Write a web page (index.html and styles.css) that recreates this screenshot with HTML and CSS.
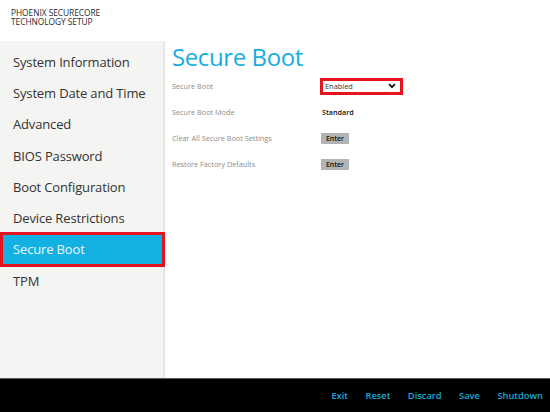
FILE: index.html
```html
<!DOCTYPE html>
<html>
<head>
<meta charset="utf-8">
<link rel="stylesheet" href="styles.css">
</head>
<body>
<div class="page">
  <header class="header">
    <div class="brand-line">PHOENIX SECURECORE</div>
    <div class="brand-line">TECHNOLOGY SETUP</div>
  </header>
  <div class="main">
    <nav class="sidebar">
      <div class="nav-item">System Information</div>
      <div class="nav-item">System Date and Time</div>
      <div class="nav-item">Advanced</div>
      <div class="nav-item">BIOS Password</div>
      <div class="nav-item">Boot Configuration</div>
      <div class="nav-item">Device Restrictions</div>
      <div class="nav-item selected">Secure Boot</div>
      <div class="nav-item">TPM</div>
    </nav>
    <section class="content">
      <h1 class="title">Secure Boot</h1>
      <div class="row">
        <div class="label">Secure Boot</div>
        <div class="select">
          <span>Enabled</span>
          <svg class="chev" width="8" height="6" viewBox="0 0 8 6"><path d="M1 1.2 L4 4.2 L7 1.2" fill="none" stroke="#111" stroke-width="1.8"/></svg>
        </div>
      </div>
      <div class="row">
        <div class="label">Secure Boot Mode</div>
        <div class="value">Standard</div>
      </div>
      <div class="row">
        <div class="label">Clear All Secure Boot Settings</div>
        <div class="btn">Enter</div>
      </div>
      <div class="row">
        <div class="label">Restore Factory Defaults</div>
        <div class="btn">Enter</div>
      </div>
    </section>
  </div>
  <footer class="footer">
    <span class="fbtn">Exit</span>
    <span class="fbtn">Reset</span>
    <span class="fbtn">Discard</span>
    <span class="fbtn">Save</span>
    <span class="fbtn">Shutdown</span>
  </footer>
</div>
</body>
</html>
```
FILE: styles.css
```css
html, body {
  margin: 0;
  padding: 0;
  background: #ffffff;
}
body {
  font-family: "Open Sans", "Noto Sans", sans-serif;
}
.page {
  width: 550px;
  height: 412px;
  display: flex;
  flex-direction: column;
  overflow: hidden;
}
.header {
  height: 41px;
  box-sizing: border-box;
  padding: 9px 0 0 11px;
}
.brand-line {
  font-size: 8.4px;
  line-height: 8.5px;
  color: #2a2a2a;
  letter-spacing: -0.05px;
}
.main {
  flex: 1;
  display: flex;
  min-height: 0;
}
.sidebar {
  width: 163px;
  background: #f4f4f2;
  border-right: 2px solid #e6e6e4;
  padding-top: 5px;
  display: flex;
  flex-direction: column;
}
.nav-item {
  height: 31.3px;
  display: flex;
  align-items: center;
  padding-left: 13px;
  font-size: 13px;
  color: #333333;
  letter-spacing: -0.15px;
  box-sizing: border-box;
}
.nav-item.selected {
  height: 35.3px;
  margin: -2px -2px -2px 0;
  border: 3px solid #e5141f;
  padding-left: 10px;
  background: #12b1e2;
  color: #eaf8fd;
}
.content {
  flex: 1;
  padding-left: 7px;
  display: flex;
  flex-direction: column;
}
.title {
  margin: 0;
  font-weight: 400;
  font-size: 24px;
  line-height: 32px;
  color: #17ace0;
  letter-spacing: -0.4px;
  height: 32px;
}
.row {
  height: 26px;
  display: flex;
  align-items: center;
}
.label {
  width: 150px;
  font-size: 7.3px;
  color: #8c8c8c;
}
.value {
  font-size: 7.2px;
  font-weight: 600;
  color: #111;
}
.select {
  width: 71px;
  height: 11px;
  border: 3px solid #e5141f;
  background: #fff;
  display: flex;
  align-items: center;
  justify-content: space-between;
  padding: 0 4px 0 2px;
  margin-left: -2px;
  font-size: 7.4px;
  color: #333;
}
.chev {
  display: block;
}
.btn {
  width: 28px;
  height: 11px;
  background: #b3b3b3;
  display: flex;
  align-items: center;
  justify-content: center;
  font-size: 7px;
  font-weight: 600;
  color: #111;
  margin-left: -1px;
}
.footer {
  height: 34px;
  box-sizing: border-box;
  background: #000;
  border-top: 1px solid #5a5a5a;
  display: flex;
  align-items: center;
  justify-content: flex-end;
  gap: 17.5px;
  padding-right: 7px;
}
.fbtn {
  font-size: 9.3px;
  font-weight: 600;
  color: #1aa8d8;
}
```
